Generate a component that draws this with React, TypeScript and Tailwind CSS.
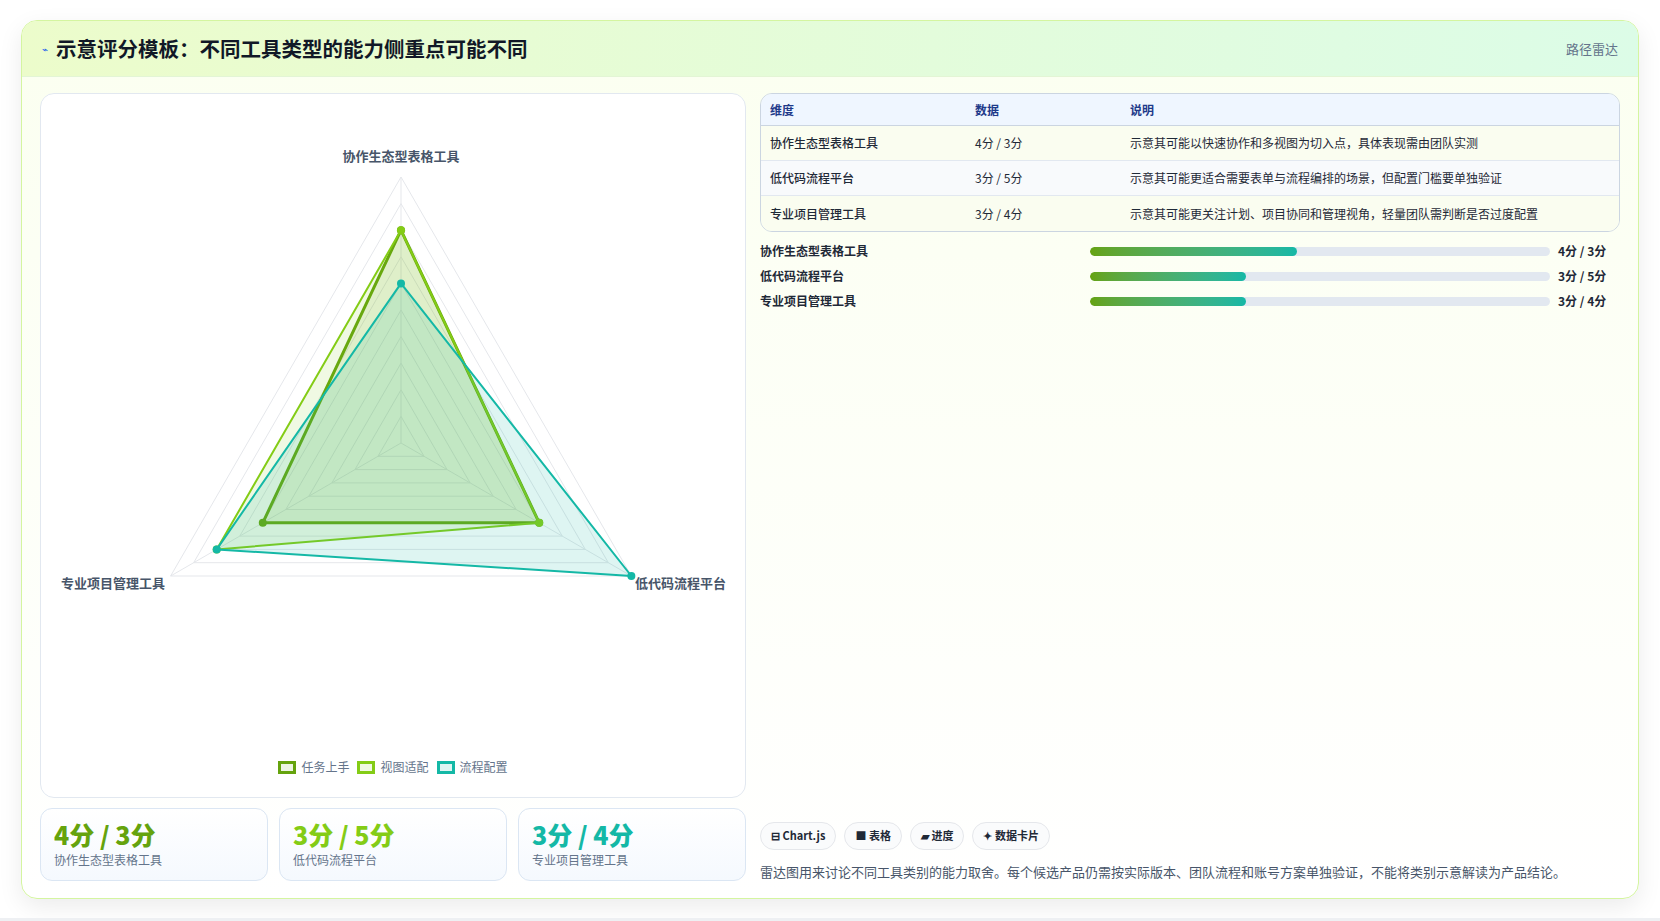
import React from "react";

const axes = ["协作生态型表格工具", "低代码流程平台", "专业项目管理工具"];
const series = [
  { name: "任务上手", color: "#65a30d", fill: "rgba(101,163,13,0.12)", data: [4, 3, 3], w: 3 },
  { name: "视图适配", color: "#84cc16", fill: "rgba(132,204,22,0.12)", data: [4, 3, 4], w: 2 },
  { name: "流程配置", color: "#14b8a6", fill: "rgba(20,184,166,0.14)", data: [3, 5, 4], w: 2 },
];
const CX = 360, CY = 346, R = 266;
function pt(i: number, v: number) {
  const a = -Math.PI / 2 + (i * 2 * Math.PI) / 3;
  const r = (v / 5) * R;
  return [CX + r * Math.cos(a), CY + r * Math.sin(a)];
}
function poly(vals: number[]) {
  return vals.map((v, i) => pt(i, v).join(",")).join(" ");
}

function Radar() {
  const rings = Array.from({ length: 10 }, (_, k) => (k + 1) * 0.5);
  return (
    <svg width="705" height="560" viewBox="0 0 705 560" className="block">
      {rings.map((r) => (
        <polygon key={r} points={poly([r, r, r])} fill="none" stroke="#e5e7eb" strokeWidth="1" />
      ))}
      {[0, 1, 2].map((i) => {
        const [x, y] = pt(i, 5);
        return <line key={i} x1={CX} y1={CY} x2={x} y2={y} stroke="#e5e7eb" strokeWidth="1" />;
      })}
      {series.map((s) => (
        <g key={s.name}>
          <polygon points={poly(s.data)} fill={s.fill} stroke={s.color} strokeWidth={s.w} strokeLinejoin="round" />
          {s.data.map((v, i) => {
            const [x, y] = pt(i, v);
            return <circle key={i} cx={x} cy={y} r="4" fill={s.color} />;
          })}
        </g>
      ))}
      <text x={CX} y={64} textAnchor="middle" fontSize="13" fontWeight="600" fill="#475569">协作生态型表格工具</text>
      <text x={20} y={491} fontSize="13" fontWeight="600" fill="#475569">专业项目管理工具</text>
      <text x={594} y={491} fontSize="13" fontWeight="600" fill="#475569">低代码流程平台</text>
    </svg>
  );
}

const rows = [
  ["协作生态型表格工具", "4分 / 3分", "示意其可能以快速协作和多视图为切入点，具体表现需由团队实测"],
  ["低代码流程平台", "3分 / 5分", "示意其可能更适合需要表单与流程编排的场景，但配置门槛要单独验证"],
  ["专业项目管理工具", "3分 / 4分", "示意其可能更关注计划、项目协同和管理视角，轻量团队需判断是否过度配置"],
];
const bars = [
  ["协作生态型表格工具", 45, "4分 / 3分"],
  ["低代码流程平台", 34, "3分 / 5分"],
  ["专业项目管理工具", 34, "3分 / 4分"],
] as const;

export default function App() {
  return (
    <div className="w-[1660px] h-[921px] bg-white relative overflow-hidden" style={{ fontFamily: '"Noto Sans CJK SC", "Noto Sans", sans-serif' }}>
      <div className="absolute left-0 right-0 bottom-0 h-[3px] bg-[#eef0f3]" />
      <div className="pt-[20px] pl-[21px]">
        <div className="w-[1618px] h-[879px] rounded-[16px] border border-[#d4f5a0] shadow-[0_8px_24px_rgba(0,0,0,0.08)] overflow-hidden flex flex-col bg-gradient-to-b from-[#fbfff0] to-white">
          <div className="h-[56px] shrink-0 flex items-center justify-between px-[20px] bg-gradient-to-r from-[#ecfccb] to-[#dcfce7] border-b border-[#e3f5d5]">
            <div className="flex items-center gap-[8px]">
              <span className="text-[10px] text-[#2563eb]">⌁</span>
              <span className="text-[20.5px] font-bold text-[#111827]">示意评分模板：不同工具类型的能力侧重点可能不同</span>
            </div>
            <span className="text-[13px] text-[#64748b]">路径雷达</span>
          </div>
          <div className="flex-1 flex gap-[14px] px-[18px] pt-[16px] pb-[18px]">
            <div className="w-[706px] flex flex-col gap-[10px]">
              <div className="h-[705px] rounded-[14px] border border-[#e2e8f0] bg-white flex flex-col items-center pt-[3px]">
                <Radar />
                <div className="flex items-center gap-[8px] mt-[101px] text-[12px] text-[#64748b]">
                  {series.map((s) => (
                    <div key={s.name} className="flex items-center gap-[5px]">
                      <span className="w-[18px] h-[13px] border-[3px]" style={{ borderColor: s.color, background: s.fill }} />
                      <span>{s.name}</span>
                    </div>
                  ))}
                </div>
              </div>
              <div className="flex gap-[11px]">
                {[
                  ["4分 / 3分", "#65a30d", "协作生态型表格工具"],
                  ["3分 / 5分", "#84cc16", "低代码流程平台"],
                  ["3分 / 4分", "#14b8a6", "专业项目管理工具"],
                ].map(([v, c, l]) => (
                  <div key={l} className="flex-1 h-[73px] rounded-[12px] border border-[#dbe6f3] bg-gradient-to-b from-white to-[#f5f9fe] px-[13px] pt-[10px]">
                    <div className="text-[25px] font-extrabold leading-[30px]" style={{ color: c }}>{v}</div>
                    <div className="text-[12px] text-[#64748b] mt-[2px]">{l}</div>
                  </div>
                ))}
              </div>
            </div>
            <div className="flex-1 flex flex-col">
              <div className="rounded-[12px] border border-[#cbd5e1] overflow-hidden text-[12px]">
                <div className="h-[32px] flex items-center bg-[#eff6ff] text-[#1e3a8a] font-semibold border-b border-[#cbd5e1]">
                  <div className="w-[214px] pl-[9px]">维度</div>
                  <div className="w-[155px]">数据</div>
                  <div>说明</div>
                </div>
                {rows.map((r, i) => (
                  <div key={i} className={`h-[35px] flex items-center text-[#1f2937] ${i === 1 ? "bg-[#f8fafc]" : "bg-[#fafdf0]"} ${i < 2 ? "border-b border-[#e2e8f0]" : ""}`}>
                    <div className="w-[214px] pl-[9px] font-medium">{r[0]}</div>
                    <div className="w-[155px]">{r[1]}</div>
                    <div>{r[2]}</div>
                  </div>
                ))}
              </div>
              <div className="flex flex-col gap-[7px] mt-[10px] pr-[10px]">
                {bars.map(([l, p, v]) => (
                  <div key={l} className="h-[18px] flex items-center text-[12px] font-semibold text-[#1f2937]">
                    <div className="w-[330px]">{l}</div>
                    <div className="w-[460px] h-[9px] rounded-full bg-[#e2e8f0] overflow-hidden">
                      <div className="h-full rounded-full bg-gradient-to-r from-[#65a30d] to-[#14b8a6]" style={{ width: `${p}%` }} />
                    </div>
                    <div className="ml-[8px]">{v}</div>
                  </div>
                ))}
              </div>
              <div className="flex-1" />
              <div className="flex gap-[8px] mb-[12px]">
                {["⊟ Chart.js", "■ 表格", "▰ 进度", "✦ 数据卡片"].map((c) => (
                  <span key={c} className="h-[28px] px-[10px] flex items-center rounded-full border border-[#e5e7eb] bg-[#fafbfc] text-[11px] font-semibold text-[#1f2937]">{c}</span>
                ))}
              </div>
              <div className="text-[13px] text-[#475569]">雷达图用来讨论不同工具类别的能力取舍。每个候选产品仍需按实际版本、团队流程和账号方案单独验证，不能将类别示意解读为产品结论。</div>
            </div>
          </div>
        </div>
      </div>
    </div>
  );
}
